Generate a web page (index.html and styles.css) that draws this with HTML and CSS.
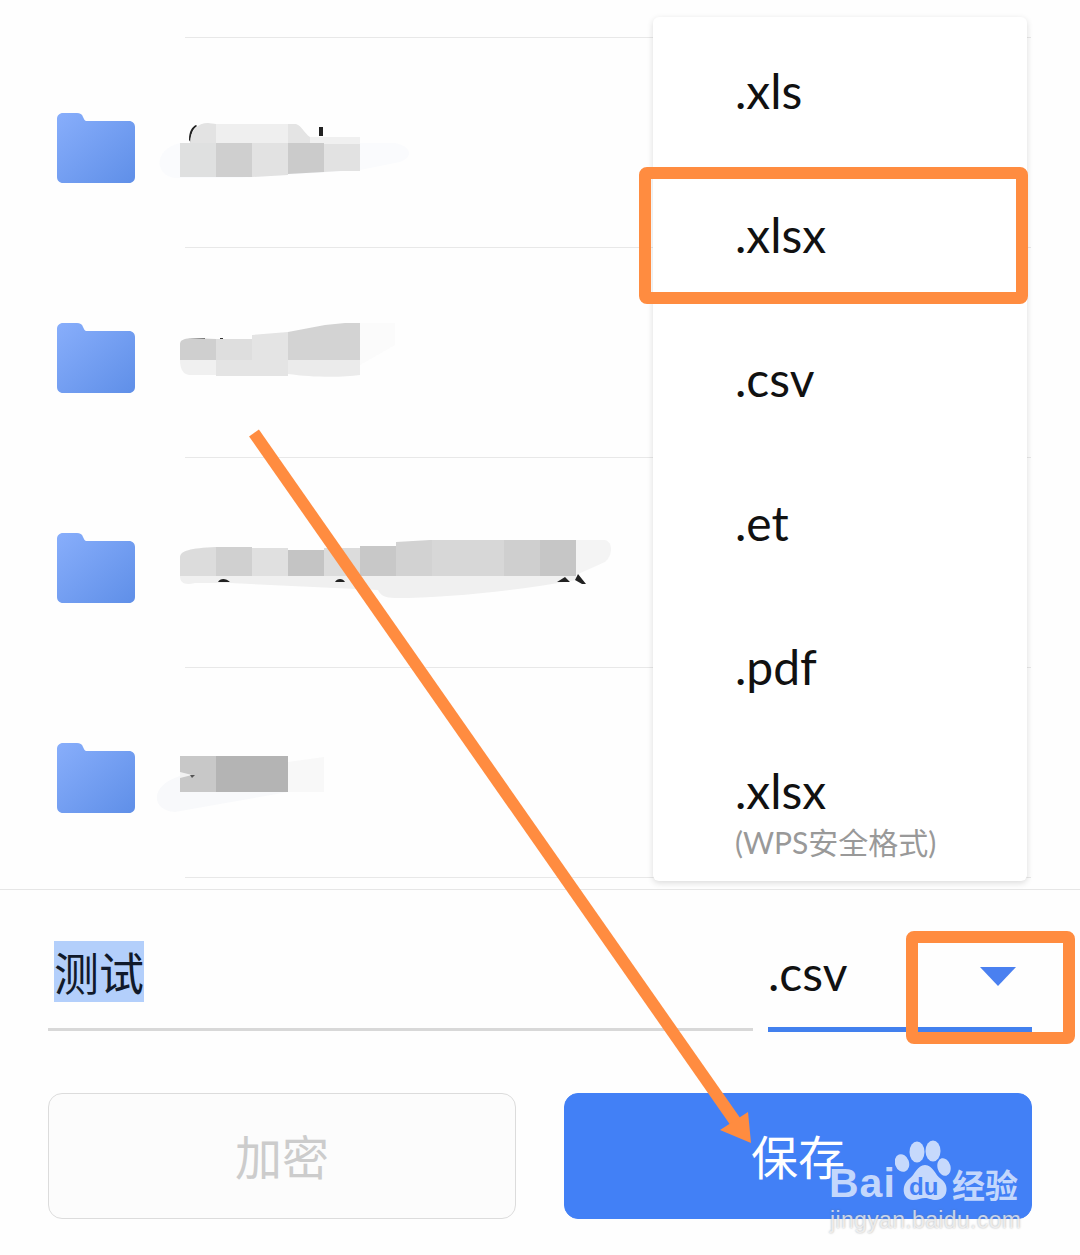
FILE: index.html
```html
<!DOCTYPE html>
<html lang="zh-CN">
<head>
  <meta charset="UTF-8">
  <meta name="viewport" content="width=device-width, initial-scale=1.0">
  <title>保存文件</title>
  <link rel="stylesheet" href="styles.css">
</head>
<body>
  <div class="page">
    <svg width="0" height="0" class="defs">
      <defs>
        <linearGradient id="folder-fill" x1="0" y1="0" x2="1" y2="1">
          <stop offset="0" stop-color="#88aefb"/>
          <stop offset="1" stop-color="#5f8fe8"/>
        </linearGradient>
        <symbol id="folder" viewBox="0 0 78 70">
          <path fill="url(#folder-fill)" d="M6 0H20C23 0 25 1 26 4L27 6C27.600 7.500 28.500 8 30 8H72C75.500 8 78 10.500 78 14V64C78 67.500 75.500 70 72 70H6C2.500 70 0 67.500 0 64V6C0 2.500 2.500 0 6 0Z"/>
        </symbol>
      </defs>
    </svg>

    <!-- File list, names are blurred out in the screenshot -->
    <div class="file-list">
      <div class="file-row">
        <svg class="folder-icon"><use href="#folder"/></svg>
        <svg class="name-mask" viewBox="150 113 470 90">
          <path fill="#fafbfd" d="M180 143H395C410 146 415 156 400 162L360 170 240 178H175C155 176 152 150 180 143Z"/>
          <path fill="#222" d="M189 140C189 131 192 127 196 125L197 126C192 130 191 134 191 143ZM319 127H323V136H319Z"/>
          <path fill="#e3e3e3" d="M190 143C190 130 198 123 208 123L216 124V143Z"/>
          <rect x="216" y="124" width="72" height="19" fill="#efefef"/>
          <path fill="#e4e4e4" d="M288 124H296C302 126 304 133 310 137V143H288Z"/>
          <rect x="310" y="137" width="50" height="7" fill="#f0f0f0"/>
          <path fill="#dfe0e0" d="M180 143H216V177L180 177Z"/>
          <path fill="#cfcfcf" d="M216 143H252V177H216Z"/>
          <path fill="#e2e2e2" d="M252 143H288V175L252 177Z"/>
          <path fill="#cbcbcb" d="M288 143H324V172L288 174Z"/>
          <path fill="#e2e2e2" d="M324 144H360V171H340L324 172Z"/>
        </svg>
      </div>
      <div class="file-row">
        <svg class="folder-icon"><use href="#folder"/></svg>
        <svg class="name-mask" viewBox="150 323 470 90">
          <path fill="#fbfbfb" d="M360 323H395V345L360 365Z"/>
          <path fill="#333" d="M190 338H205V339H190ZM220 338H223V339H220ZM262 372H270V374H262ZM280 372H300V373H280ZM345 372H358V374H345Z"/>
          <path fill="#cfcfcf" d="M180 344C180 340 184 339 190 338L216 339V360H180Z"/>
          <path fill="#dedede" d="M216 339H252V360H216Z"/>
          <path fill="#e4e4e4" d="M252 335L288 332V360H252Z"/>
          <path fill="#d3d3d3" d="M288 332L325 325 345 323H360V360H288Z"/>
          <path fill="#f0f0f0" d="M180 360H216V375L190 375C184 375 180 370 180 360Z"/>
          <path fill="#e4e4e4" d="M216 360H288V376H216Z"/>
          <path fill="#ebebeb" d="M288 360H360V375C340 378 310 377 288 374Z"/>
        </svg>
      </div>
      <div class="file-row">
        <svg class="folder-icon"><use href="#folder"/></svg>
        <svg class="name-mask" viewBox="150 533 470 90">
          <path fill="#f0f0f0" d="M180 576H576V580C520 590 450 598 395 598 385 598 380 595 378 590L230 583H195C186 585 180 584 180 576Z"/>
          <path fill="#f4f4f4" d="M576 540H605C613 542 613 555 605 562L576 575Z"/>
          <path fill="#222" d="M218 582C220 578 226 578 230 582ZM335 582C337 578 343 578 345 582ZM557 582L565 577 570 582ZM575 580L578 574 586 584H582Z"/>
          <path fill="#dcdcdc" d="M180 557C180 551 190 548 216 547V576H180Z"/>
          <path fill="#d0d0d0" d="M216 547H252V576H216Z"/>
          <path fill="#e0e0e0" d="M252 548H288V576H252Z"/>
          <path fill="#c4c4c4" d="M288 550H324V576H288Z"/>
          <path fill="#dcdcdc" d="M324 548H360V576H324Z"/>
          <path fill="#c8c8c8" d="M360 546H396V576H360Z"/>
          <path fill="#d2d2d2" d="M396 542L430 540H432V576H396Z"/>
          <path fill="#d7d7d7" d="M432 540H504V576H432Z"/>
          <path fill="#cfcfcf" d="M504 540H540V576H504Z"/>
          <path fill="#c6c6c6" d="M540 540H576V576H540Z"/>
        </svg>
      </div>
      <div class="file-row">
        <svg class="folder-icon"><use href="#folder"/></svg>
        <svg class="name-mask" viewBox="150 743 470 90">
          <path fill="#f8f9fb" d="M180 776H288V792L220 804 175 812C150 810 150 785 180 776Z"/>
          <path fill="#f8f8f8" d="M288 762L324 757V792H288Z"/>
          <rect x="180" y="756" width="36" height="36" fill="#c8c8c8"/>
          <rect x="216" y="756" width="72" height="36" fill="#b4b4b4"/>
          <path fill="#f2f2f2" d="M180 772L192 775 180 778Z"/>
          <path fill="#555" d="M190 775H195L192 778Z"/>
        </svg>
      </div>
    </div>

    <div class="save-panel">
      <div class="name-line">
        <div class="name-field"><span class="name-text">测试</span></div>
        <div class="ext-field">
          <span class="ext-value">.csv</span>
          <span class="ext-arrow"></span>
        </div>
      </div>
      <div class="actions">
        <button class="btn btn-encrypt">加密</button>
        <button class="btn btn-save">保存</button>
      </div>
    </div>

    <!-- Format dropdown -->
    <ul class="format-menu">
      <li class="format-item">.xls</li>
      <li class="format-item">.xlsx</li>
      <li class="format-item">.csv</li>
      <li class="format-item">.et</li>
      <li class="format-item">.pdf</li>
      <li class="format-item format-item-last">
        <span>.xlsx</span>
        <span class="format-note">(WPS安全格式)</span>
      </li>
    </ul>

    <!-- Orange marks drawn on top of the screenshot -->
    <svg class="annotations" viewBox="0 0 1080 1255">
      <rect x="645" y="173" width="377" height="125" rx="2" class="mark-box"/>
      <rect x="912" y="937" width="157" height="101" rx="2" class="mark-box"/>
      <path d="M254 433L737 1124" class="mark-line"/>
      <path d="M751 1143L720 1130 748 1112Z" class="mark-head"/>
    </svg>

    <div class="watermark">
      <span class="wm-bai">Bai</span>
      <svg class="wm-paw" viewBox="895 1140 56 62">
        <ellipse cx="902" cy="1163" rx="7" ry="9" transform="rotate(-20 902 1163)"/>
        <ellipse cx="917" cy="1152" rx="7.500" ry="10.500"/>
        <ellipse cx="933" cy="1151" rx="7.500" ry="10.500"/>
        <ellipse cx="944" cy="1167" rx="6.500" ry="9" transform="rotate(-15 944 1167)"/>
        <path d="M925 1165C933 1165 935 1175 941 1179 950 1185 948 1200 936 1200 931 1200 929 1198 925 1198 921 1198 918 1200 913 1200 902 1200 901 1185 909 1179 915 1175 917 1165 925 1165Z"/>
      </svg>
      <span class="wm-du">du</span>
      <span class="wm-jy">经验</span>
      <span class="wm-url">jingyan.baidu.com</span>
    </div>
  </div>
</body>
</html>
```
FILE: styles.css
```css
* {
  box-sizing: border-box;
}

body {
  margin: 0;
  background-color: #fefefe;
  font-family: Lato, "Noto Sans CJK SC", sans-serif;
}

.page {
  position: relative;
  width: 1080px;
  height: 1255px;
  overflow: hidden;
}

.defs {
  position: absolute;
}

/* File list */
.file-list {
  padding-top: 38px;
}

.file-list::before {
  content: "";
  position: absolute;
  top: 37px;
  left: 185px;
  right: 49px;
  height: 1px;
  background-color: #e8e8e8;
}

.file-row {
  position: relative;
  display: flex;
  align-items: flex-start;
  gap: 15px;
  height: 210px;
  padding: 75px 0 0 57px;
}

.file-row::after {
  content: "";
  position: absolute;
  bottom: 0;
  left: 185px;
  right: 49px;
  height: 1px;
  background-color: #e8e8e8;
}

.folder-icon {
  width: 78px;
  height: 70px;
  flex-shrink: 0;
}

.name-mask {
  width: 470px;
  height: 90px;
}

/* Name, format and buttons */
.save-panel {
  margin-top: 11px;
  padding: 0 48px;
  border-top: 1px solid #e6e6e6;
}

.name-line {
  display: flex;
  align-items: flex-start;
  gap: 15px;
  height: 142px;
}

.name-field {
  width: 705px;
  height: 141px;
  padding: 51px 0 0 6px;
  border-bottom: 3px solid #d8d8d8;
}

.name-text {
  display: block;
  width: 90px;
  height: 61px;
  background-color: #b3cffb;
  color: #111a2a;
  font-size: 45px;
  font-family: "Noto Sans CJK SC", sans-serif;
  line-height: 61px;
}

.ext-field {
  display: flex;
  align-items: center;
  justify-content: space-between;
  width: 264px;
  height: 142px;
  padding: 27px 16px 0 0;
  border-bottom: 5px solid #4280ee;
}

.ext-value {
  color: #111;
  font-size: 48px;
}

.ext-arrow {
  width: 0;
  height: 0;
  margin-top: 8px;
  border-left: 18px solid transparent;
  border-right: 18px solid transparent;
  border-top: 19px solid #4a80f0;
}

.actions {
  display: flex;
  gap: 48px;
  margin-top: 61px;
}

.btn {
  flex: 1;
  height: 126px;
  padding: 0 0 4px;
  border-radius: 14px;
  font-size: 47px;
  font-family: "Noto Sans CJK SC", sans-serif;
}

.btn-encrypt {
  background-color: #fcfcfc;
  border: 1px solid #dcdcdc;
  color: #cccccc;
}

.btn-save {
  background-color: #4280f6;
  border: 1px solid #4280f6;
  color: white;
}

/* Dropdown */
.format-menu {
  position: absolute;
  top: 17px;
  left: 653px;
  width: 374px;
  height: 864px;
  margin: 0;
  padding: 4px 0 0 0;
  list-style: none;
  background-color: white;
  border-radius: 6px;
  box-shadow: 0 2px 6px rgba(0, 0, 0, 0.14);
}

.format-item {
  display: flex;
  align-items: center;
  height: 144px;
  padding: 0 0 6px 82px;
  color: #111;
  font-size: 48px;
}

.format-item-last {
  flex-direction: column;
  align-items: flex-start;
  justify-content: flex-start;
  height: auto;
  padding-top: 22px;
}

.format-item-last span:first-child {
  line-height: 56px;
}

.format-note {
  margin-top: 3px;
  color: #999;
  font-size: 30px;
  line-height: 40px;
}

/* Annotations */
.annotations {
  position: absolute;
  top: 0;
  left: 0;
  width: 1080px;
  height: 1255px;
  pointer-events: none;
}

.mark-box {
  fill: none;
  stroke: #ff8c40;
  stroke-width: 12;
}

.mark-line {
  fill: none;
  stroke: #ff8c40;
  stroke-width: 12;
}

.mark-head {
  fill: #ff8c40;
}

/* Baidu watermark */
.watermark {
  position: absolute;
  top: 1140px;
  left: 826px;
  width: 200px;
  height: 95px;
  color: rgba(255, 255, 255, 0.7);
  font-family: "Liberation Sans", sans-serif;
}

.wm-bai {
  position: absolute;
  top: 21px;
  left: 3px;
  font-size: 41px;
  font-weight: bold;
  line-height: 44px;
  letter-spacing: 1px;
}

.wm-paw {
  position: absolute;
  top: 0;
  left: 69px;
  width: 56px;
  height: 62px;
  fill: rgba(255, 255, 255, 0.7);
}

.wm-du {
  position: absolute;
  top: 35px;
  left: 83px;
  color: #4280f6;
  font-size: 24px;
  font-weight: bold;
  line-height: 24px;
}

.wm-jy {
  position: absolute;
  top: 24px;
  left: 126px;
  font-family: "Noto Sans CJK SC", sans-serif;
  font-size: 33px;
  font-weight: bold;
  line-height: 40px;
}

.wm-url {
  position: absolute;
  top: 67px;
  left: 4px;
  font-size: 23px;
  line-height: 26px;
  letter-spacing: 0.35px;
  white-space: nowrap;
  text-shadow: 0 0 2px rgba(110, 110, 110, 0.6);
}
```
